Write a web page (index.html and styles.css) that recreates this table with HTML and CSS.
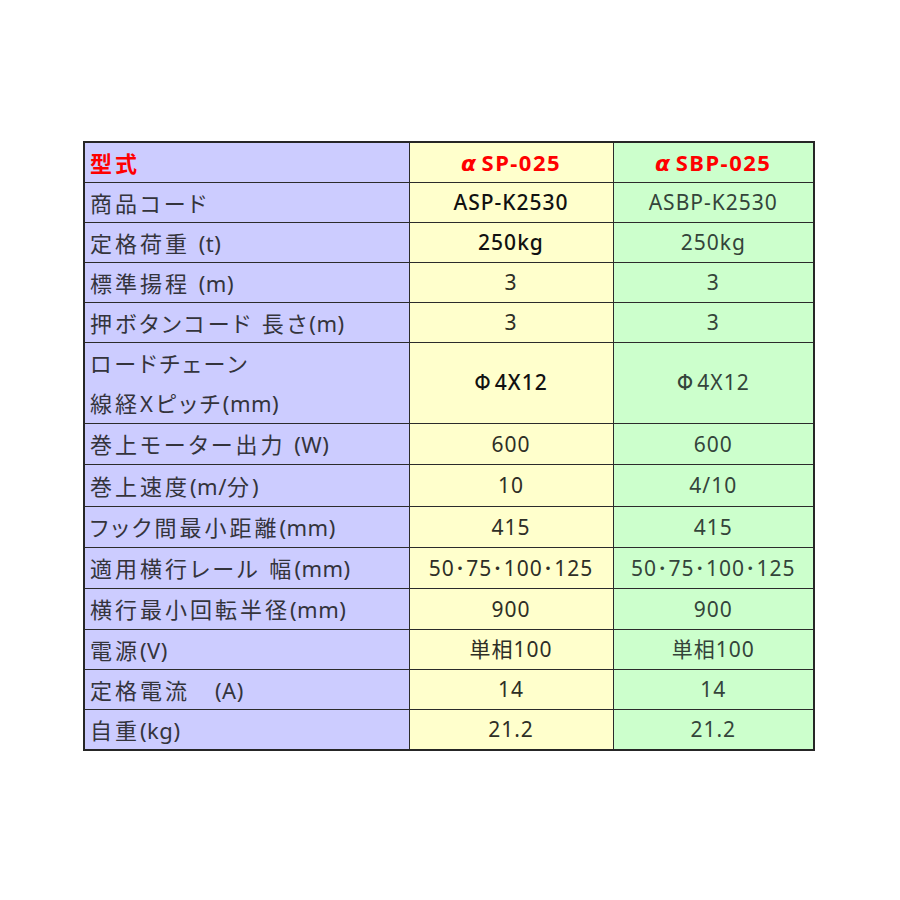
FILE: index.html
```html
<!DOCTYPE html>
<html lang="ja">
<head>
<meta charset="utf-8">
<link rel="stylesheet" href="styles.css">
</head>
<body>
<table class="spec">
  <colgroup>
    <col class="c-label">
    <col class="c-a">
    <col class="c-b">
  </colgroup>
  <tr class="h40">
    <td class="label head">型式</td>
    <td class="a head"><span class="alpha">α</span>SP-025</td>
    <td class="b head"><span class="alpha">α</span>SBP-025</td>
  </tr>
  <tr class="h40">
    <td class="label">商品コード</td>
    <td class="a strong">ASP-K2530</td>
    <td class="b">ASBP-K2530</td>
  </tr>
  <tr class="h40">
    <td class="label">定格荷重 <span class="unit">(t)</span></td>
    <td class="a strong">250kg</td>
    <td class="b">250kg</td>
  </tr>
  <tr class="h40">
    <td class="label">標準揚程 <span class="unit">(m)</span></td>
    <td class="a">3</td>
    <td class="b">3</td>
  </tr>
  <tr class="h40">
    <td class="label">押ボタンコード 長さ<span class="unit">(m)</span></td>
    <td class="a">3</td>
    <td class="b">3</td>
  </tr>
  <tr class="h80">
    <td class="label two"><span class="line">ロードチェーン</span><span class="line">線経Xピッチ<span class="unit">(mm)</span></span></td>
    <td class="a strong"><span class="phi">Φ</span>4X12</td>
    <td class="b"><span class="phi">Φ</span>4X12</td>
  </tr>
  <tr class="h41">
    <td class="label">巻上モーター出力 <span class="unit">(W)</span></td>
    <td class="a">600</td>
    <td class="b">600</td>
  </tr>
  <tr class="h42">
    <td class="label">巻上速度<span class="unit">(m/</span>分<span class="unit">)</span></td>
    <td class="a">10</td>
    <td class="b">4/10</td>
  </tr>
  <tr class="h41">
    <td class="label">フック間最小距離<span class="unit">(mm)</span></td>
    <td class="a">415</td>
    <td class="b">415</td>
  </tr>
  <tr class="h41">
    <td class="label">適用横行レール 幅<span class="unit">(mm)</span></td>
    <td class="a">50･75･100･125</td>
    <td class="b">50･75･100･125</td>
  </tr>
  <tr class="h41">
    <td class="label">横行最小回転半径<span class="unit">(mm)</span></td>
    <td class="a">900</td>
    <td class="b">900</td>
  </tr>
  <tr class="h40">
    <td class="label">電源<span class="unit">(V)</span></td>
    <td class="a">単相100</td>
    <td class="b">単相100</td>
  </tr>
  <tr class="h40">
    <td class="label">定格電流　<span class="unit">(A)</span></td>
    <td class="a">14</td>
    <td class="b">14</td>
  </tr>
  <tr class="h40">
    <td class="label">自重<span class="unit">(kg)</span></td>
    <td class="a">21.2</td>
    <td class="b">21.2</td>
  </tr>
</table>
</body>
</html>
```

FILE: styles.css
```css
html, body {
  margin: 0;
  padding: 0;
  background: #ffffff;
}

body {
  padding: 141px 0 0 83px;
  font-family: "Noto Sans", "Noto Sans CJK JP", sans-serif;
}

.spec {
  border-collapse: collapse;
  table-layout: fixed;
  width: 730px;
  border: 2px solid #262626;
}

.c-label { width: 325px; }
.c-a { width: 204px; }
.c-b { width: 201px; }

.spec td {
  border: 1px solid #2b2b2b;
  padding: 0;
  font-size: 21px;
  line-height: 1;
  vertical-align: middle;
  white-space: nowrap;
  overflow: hidden;
}

.h40 td { height: 39px; }
.h41 td { height: 40px; }
.h42 td { height: 41px; }
.h80 td { height: 79px; }

.label {
  background: #ccccff;
  padding-left: 5px !important;
  text-align: left;
  color: #34343c;
  font-size: 22px !important;
  letter-spacing: 3px;
  font-feature-settings: "palt";
}

.unit {
  letter-spacing: 0.5px;
}

.a {
  background: #ffffcc;
  text-align: center;
  color: #2e2e26;
  letter-spacing: 1px;
}

.b {
  background: #ccffcc;
  text-align: center;
  color: #34443a;
  letter-spacing: 1px;
}

.a.strong {
  font-weight: 500;
  color: #111111;
}

.spec .head {
  color: #ff0000;
  font-weight: 700;
  font-size: 22px;
  letter-spacing: 1.5px;
}

.label.head {
  letter-spacing: 3px;
}

.alpha {
  font-family: "DejaVu Sans", sans-serif;
  font-style: italic;
  margin-right: 4px;
}

.phi {
  font-family: "DejaVu Sans", sans-serif;
  margin-right: 3px;
}

.two {
  vertical-align: top !important;
}

.line {
  display: block;
  height: 40px;
  line-height: 40px;
}
```
